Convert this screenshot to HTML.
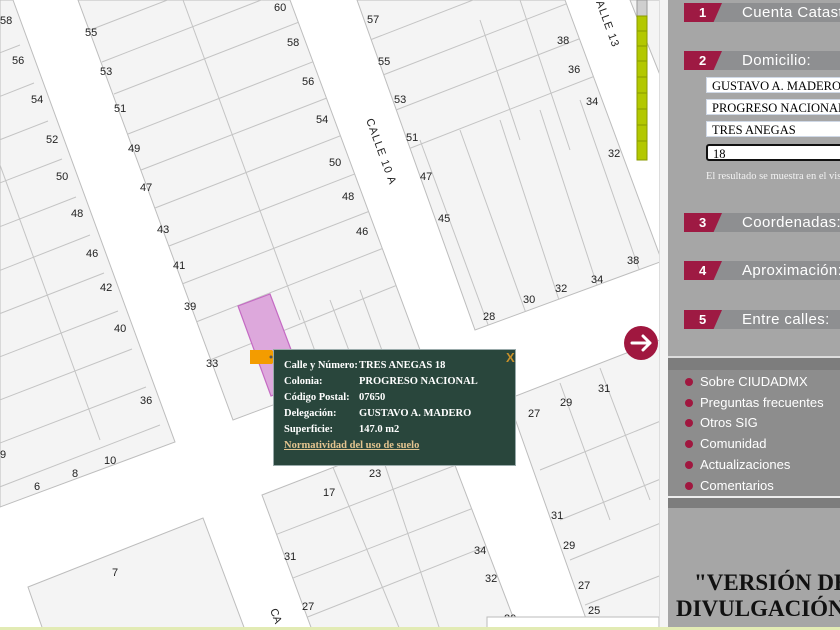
<!DOCTYPE html>
<html><head><meta charset="utf-8">
<style>
body{margin:0;width:840px;height:630px;overflow:hidden;position:relative;background:#fff;font-family:"Liberation Sans",sans-serif}
#map{position:absolute;left:0;top:0;width:659px;height:630px;overflow:hidden;background:#fff}
.side{position:absolute;left:668px;top:0;width:172px;height:630px;background:#a6a6a6;overflow:hidden}
.hdr{position:absolute;left:16px;height:19px;width:160px;background:#8e8f91}
.hdr .n{position:absolute;left:0;top:0;height:19px;width:38px;background:#9e1a43;clip-path:polygon(0 0,100% 0,78% 100%,0 100%);color:#fff;font-weight:bold;font-size:13px;line-height:19px;text-indent:15px}
.hdr .t{position:absolute;left:58px;top:0;color:#fff;font-size:15px;line-height:19px;white-space:nowrap;letter-spacing:.4px}
.inp{position:absolute;left:38px;width:140px;height:16px;background:#fff;border:1px solid #cfd8e6;font-family:"Liberation Serif",serif;font-size:12.5px;line-height:16px;padding-left:5px;box-sizing:border-box;white-space:nowrap}
.menu{position:absolute;left:0;top:370px;width:172px;height:126px;background:#8d8d8d}
.mi{position:absolute;left:17px;color:#fff;font-size:13px;white-space:nowrap}
.mi:before{content:"";display:inline-block;width:8px;height:8px;border-radius:50%;background:#a0173f;margin-right:7px;vertical-align:0}
.pop{position:absolute;left:273px;top:349px;width:243px;height:117px;background:#29463c;border:1px solid #9aa;box-sizing:border-box;font-family:"Liberation Serif",serif;font-weight:bold;font-size:10.5px;color:#fff}
.pop div{position:absolute;white-space:nowrap}
</style></head><body>
<div id="map">
<svg width="659" height="630" xmlns="http://www.w3.org/2000/svg" font-family="Liberation Sans" font-size="11" fill="#222">
<defs>
<clipPath id="cA"><polygon points="0,0 13,0 175,442 0,507"/></clipPath>
<clipPath id="cB"><polygon points="78,0 290,0 420,350 233,420"/></clipPath>
<clipPath id="cC"><polygon points="357,0 565,0 660,256 660,262 475,330"/></clipPath>
<clipPath id="cF1"><polygon points="262,495 440,426 518,630 312,630"/></clipPath>
<clipPath id="cF2"><polygon points="508,399 660,340 660,630 590,630"/></clipPath>
</defs>
<g fill="#f4f4f4" stroke="#bdbdbd" stroke-width="1">
<polygon points="0,0 13,0 175,442 0,507"/>
<polygon points="78,0 290,0 420,350 233,420"/>
<polygon points="357,0 565,0 660,256 660,262 475,330"/>
<polygon points="630,0 660,0 660,75"/>
<polygon points="28,587 203,518 245,630 43,630"/>
<polygon points="262,495 440,426 518,630 312,630"/>
<polygon points="508,399 660,340 660,630 590,630"/>
</g>
<g stroke="#c4c4c4" stroke-width="1" fill="none">
<g clip-path="url(#cA)">
<path d="M-60,0 L100,440"/>
<path d="M20,45 L-60,76 M34,83 L-60,120 M48,121 L-60,163 M62,159 L-60,206 M76,197 L-60,250 M90,235 L-60,294 M104,273 L-60,337 M118,311 L-60,380 M132,349 L-60,423 M146,387 L-60,466 M160,425 L-60,510"/>
</g>
<g clip-path="url(#cB)">
<path d="M183,0 L300,320"/>
<path d="M90,30 L400,-90 M102,62 L400,-54 M114,94 L420,-25 M128,134 L420,20 M141,170 L430,58 M155,208 L440,97 M169,246 L450,137 M182,284 L460,176 M196,322 L470,214 M210,360 L480,252"/>
<path d="M300,310 L340,420 M330,300 L375,420 M360,290 L400,400"/>
</g>
<g clip-path="url(#cC)">
<path d="M370,40 L700,-88 M383,75 L700,-48 M396,110 L700,-8 M490,330 L420,140 M527,316 L460,130 M560,303 L500,120 M598,288 L540,110 M640,272 L580,100 M380,160 L700,35 M480,20 L520,140 M520,0 L570,150"/>
</g>
<g clip-path="url(#cF1)">
<path d="M262,540 L500,448 M262,590 L520,490 M300,620 L540,525 M330,460 L400,630 M380,450 L440,630"/>
</g>
<g clip-path="url(#cF2)">
<path d="M560,383 L610,520 M600,368 L650,500 M540,470 L700,405 M560,520 L700,463 M570,560 L700,507 M585,605 L700,560"/>
</g>
</g>
<polygon points="238,306 270,294 304,384 271,396" fill="#dda8dc" stroke="#c46ac3" stroke-width="1.2"/>
<g>
<text x="0" y="24">58</text><text x="12" y="64">56</text><text x="31" y="103">54</text><text x="46" y="143">52</text><text x="56" y="180">50</text><text x="71" y="217">48</text><text x="86" y="257">46</text><text x="100" y="291">42</text><text x="114" y="332">40</text><text x="140" y="404">36</text>
<text x="85" y="36">55</text><text x="100" y="75">53</text><text x="114" y="112">51</text><text x="128" y="152">49</text><text x="140" y="191">47</text><text x="157" y="233">43</text><text x="173" y="269">41</text><text x="184" y="310">39</text><text x="206" y="367">33</text>
<text x="274" y="11">60</text><text x="287" y="46">58</text><text x="302" y="85">56</text><text x="316" y="123">54</text><text x="329" y="166">50</text><text x="342" y="200">48</text><text x="356" y="235">46</text>
<text x="367" y="23">57</text><text x="378" y="65">55</text><text x="394" y="103">53</text><text x="406" y="141">51</text><text x="420" y="180">47</text><text x="438" y="222">45</text>
<text x="557" y="44">38</text><text x="568" y="73">36</text><text x="586" y="105">34</text><text x="608" y="157">32</text><text x="627" y="264">38</text><text x="591" y="283">34</text><text x="555" y="292">32</text><text x="523" y="303">30</text><text x="483" y="320">28</text>
<text x="598" y="392">31</text><text x="560" y="406">29</text><text x="528" y="417">27</text>
<text x="0" y="458">9</text><text x="34" y="490">6</text><text x="72" y="477">8</text><text x="104" y="464">10</text><text x="112" y="576">7</text>
<text x="323" y="496">17</text><text x="369" y="477">23</text><text x="284" y="560">31</text><text x="302" y="610">27</text>
<text x="474" y="554">34</text><text x="485" y="582">32</text><text x="551" y="519">31</text><text x="563" y="549">29</text><text x="578" y="589">27</text><text x="588" y="614">25</text><text x="504" y="622">20</text>
<text x="426" y="457" fill="#666">L-1</text>
<text transform="translate(366,120) rotate(70)" font-size="11" letter-spacing="1">CALLE 10 A</text>
<text transform="translate(596,2) rotate(70)" font-size="11" letter-spacing="1">ALLE 13</text>
<text transform="translate(270,610) rotate(70)" font-size="11">CA</text>
</g>
<rect x="637" y="0" width="10" height="16" fill="#cfcfcf" stroke="#999"/>
<rect x="637" y="16" width="10" height="144" fill="#b3c800" stroke="#8a9a00"/>
<g stroke="#8a9a00"><path d="M637,31H647M637,46H647M637,61H647M637,77H647M637,93H647M637,109H647M637,125H647M637,141H647"/></g>
<rect x="487" y="617" width="172" height="13" fill="#fff" stroke="#bbb"/>
<circle cx="641" cy="343" r="17" fill="#a0173f"/>
<path d="M632,343H650M643,336L650,343L643,350" stroke="#fff" stroke-width="3" fill="none" stroke-linecap="round" stroke-linejoin="round"/>
<polygon points="250,350 272,350 278,357 272,364 250,364" fill="#f39c00"/>
<circle cx="271" cy="357" r="1.5" fill="#555"/>
</svg>
<div class="pop">
<div style="left:10px;top:10px">Calle y Número:</div><div style="left:85px;top:10px">TRES ANEGAS 18</div>
<div style="left:10px;top:26px">Colonia:</div><div style="left:85px;top:26px">PROGRESO NACIONAL</div>
<div style="left:10px;top:42px">Código Postal:</div><div style="left:85px;top:42px">07650</div>
<div style="left:10px;top:58px">Delegación:</div><div style="left:85px;top:58px">GUSTAVO A. MADERO</div>
<div style="left:10px;top:74px">Superficie:</div><div style="left:85px;top:74px">147.0 m2</div>
<div style="left:10px;top:90px;color:#e3c48f;text-decoration:underline">Normatividad del uso de suelo</div>
<div style="left:232px;top:0px;color:#c8902a;font-family:'Liberation Sans';font-size:13px">X</div>
</div>
</div>
<div style="position:absolute;left:659px;top:0;width:9px;height:630px;background:#f4f4f4;border-left:1px solid #ddd;box-sizing:border-box"></div>
<div class="side">
<div class="hdr" style="top:3px"><div class="n">1</div><div class="t">Cuenta Catastral</div></div>
<div class="hdr" style="top:51px"><div class="n">2</div><div class="t">Domicilio:</div></div>
<div class="inp" style="top:77px">GUSTAVO A. MADERO</div>
<div class="inp" style="top:99px">PROGRESO NACIONAL</div>
<div class="inp" style="top:121px">TRES ANEGAS</div>
<div class="inp" style="top:144px;border:2px solid #111;border-radius:3px;height:17px">18</div>
<div style="position:absolute;left:38px;top:171px;font-family:'Liberation Serif',serif;font-size:10.5px;color:#f2f2f2;white-space:nowrap">El resultado se muestra en el visor</div>
<div class="hdr" style="top:213px"><div class="n">3</div><div class="t">Coordenadas:</div></div>
<div class="hdr" style="top:261px"><div class="n">4</div><div class="t">Aproximación:</div></div>
<div class="hdr" style="top:310px"><div class="n">5</div><div class="t">Entre calles:</div></div>
<div style="position:absolute;left:0;top:356px;width:172px;height:2px;background:#ddd"></div>
<div style="position:absolute;left:0;top:358px;width:172px;height:12px;background:#7d7d7d"></div>
<div class="menu">
<div class="mi" style="top:4px">Sobre CIUDADMX</div>
<div class="mi" style="top:25px">Preguntas frecuentes</div>
<div class="mi" style="top:45px">Otros SIG</div>
<div class="mi" style="top:66px">Comunidad</div>
<div class="mi" style="top:87px">Actualizaciones</div>
<div class="mi" style="top:108px">Comentarios</div>
</div>
<div style="position:absolute;left:0;top:496px;width:172px;height:2px;background:#eee"></div>
<div style="position:absolute;left:0;top:498px;width:172px;height:10px;background:#7d7d7d"></div>
<div style="position:absolute;left:26px;top:570px;font-family:'Liberation Serif',serif;font-weight:bold;font-size:23px;color:#111;white-space:nowrap">"VERSIÓN DE</div>
<div style="position:absolute;left:8px;top:596px;font-family:'Liberation Serif',serif;font-weight:bold;font-size:23px;color:#111;white-space:nowrap">DIVULGACIÓN</div>
</div>
<div style="position:absolute;left:0;top:627px;width:840px;height:3px;background:#e2ebb4"></div>
</body></html>
